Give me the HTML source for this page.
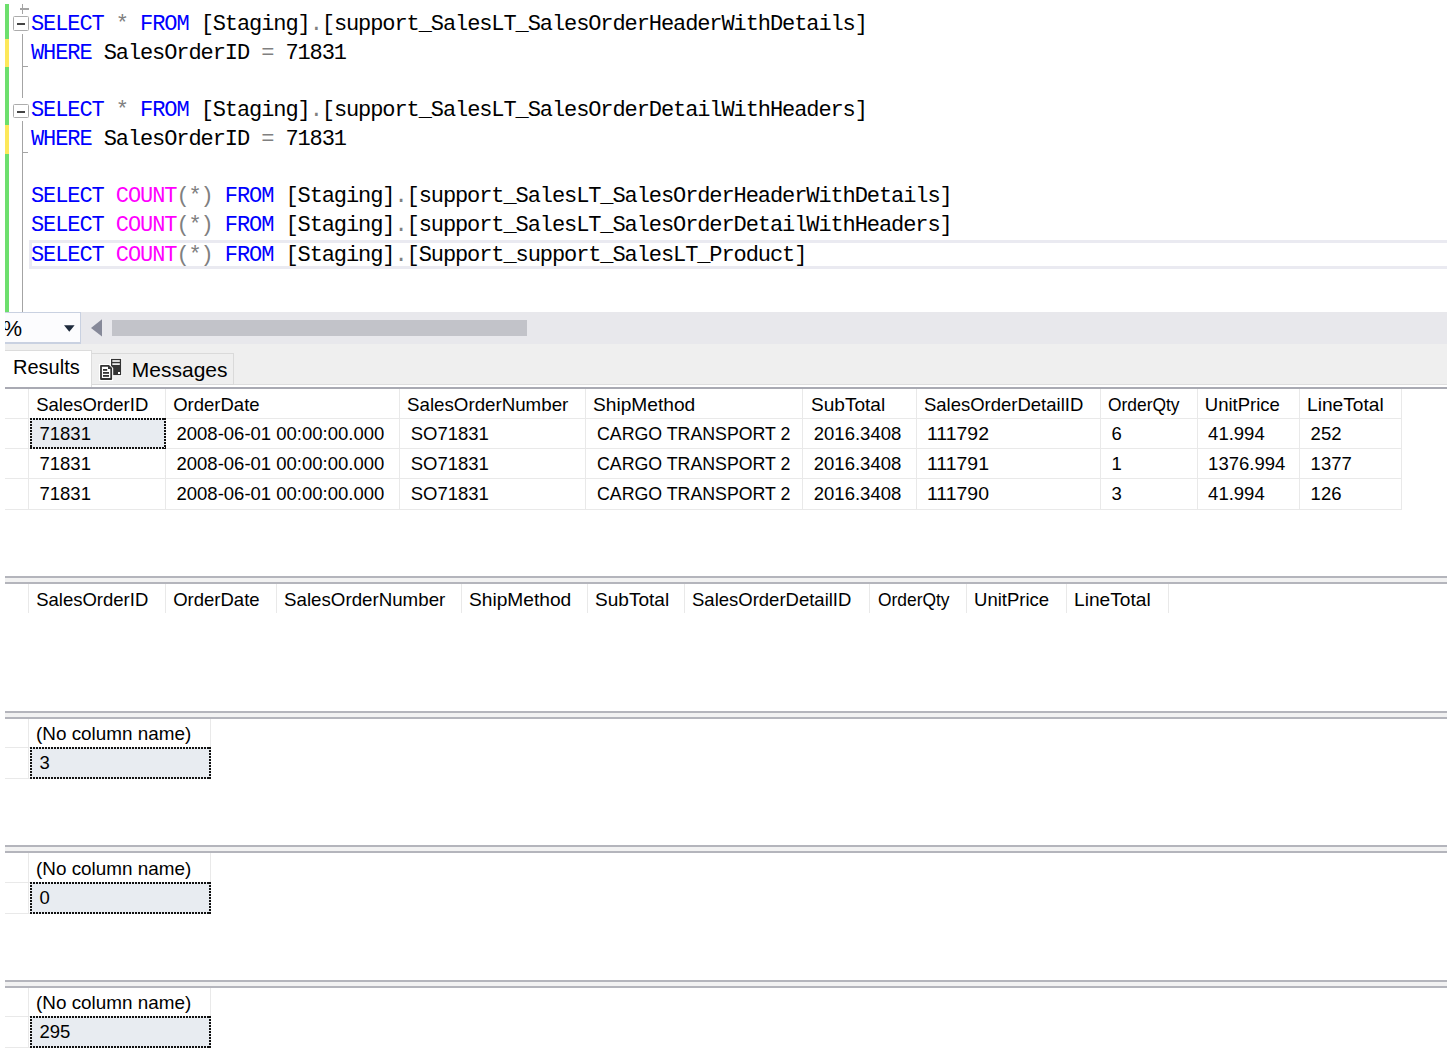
<!DOCTYPE html>
<html><head><meta charset="utf-8"><style>
html,body{margin:0;padding:0;background:#fff;}
body{width:1455px;height:1050px;position:relative;overflow:hidden;}
.m{position:absolute;white-space:pre;line-height:0;font-family:"Liberation Mono", monospace;font-size:22.0px;letter-spacing:-1.090px;}
.s{position:absolute;white-space:pre;line-height:0;font-family:"Liberation Sans", sans-serif;font-size:18.5px;color:#000;}
</style></head><body>
<div style="position:absolute;left:5px;top:4px;width:4px;height:34.6px;background:#6ddf6d;"></div>
<div style="position:absolute;left:5px;top:38.6px;width:4px;height:28.4px;background:#fde85a;"></div>
<div style="position:absolute;left:5px;top:67px;width:4px;height:57.7px;background:#6ddf6d;"></div>
<div style="position:absolute;left:5px;top:124.7px;width:4px;height:29.2px;background:#fde85a;"></div>
<div style="position:absolute;left:5px;top:153.9px;width:4px;height:158.1px;background:#6ddf6d;"></div>
<div style="position:absolute;left:21.6px;top:4.2px;width:1.5px;height:9.9px;background:#a4a4a4;"></div>
<div style="position:absolute;left:20.2px;top:8.4px;width:8.4px;height:1.4px;background:#a4a4a4;"></div>
<div style="position:absolute;left:21.6px;top:34.3px;width:1.5px;height:64.1px;background:#a4a4a4;"></div>
<div style="position:absolute;left:21.6px;top:66px;width:6.4px;height:1.4px;background:#a4a4a4;"></div>
<div style="position:absolute;left:21.6px;top:120.7px;width:1.5px;height:191.3px;background:#a4a4a4;"></div>
<div style="position:absolute;left:21.6px;top:152px;width:6.4px;height:1.4px;background:#a4a4a4;"></div>
<div style="position:absolute;left:13px;top:16px;width:15.8px;height:14.9px;box-sizing:border-box;border:1.4px solid #acacac;border-radius:1.5px;background:#fff"></div>
<div style="position:absolute;left:17px;top:22.9px;width:7.8px;height:2.1px;background:#454545;"></div>
<div style="position:absolute;left:13px;top:103.6px;width:15.8px;height:14.9px;box-sizing:border-box;border:1.4px solid #acacac;border-radius:1.5px;background:#fff"></div>
<div style="position:absolute;left:17px;top:110.5px;width:7.8px;height:2.1px;background:#454545;"></div>
<div style="position:absolute;left:29.3px;top:239.8px;width:1417.7px;height:29.2px;box-sizing:border-box;border:3px solid #eaeaf1;border-right:none"></div>
<div class="m" style="left:31.0px;top:24.54px"><span style="color:#0000ff">SELECT</span><span style="color:#000000"> </span><span style="color:#808080">*</span><span style="color:#000000"> </span><span style="color:#0000ff">FROM</span><span style="color:#000000"> </span><span style="color:#000000">[Staging]</span><span style="color:#808080">.</span><span style="color:#000000">[support_SalesLT_SalesOrderHeaderWithDetails]</span></div>
<div class="m" style="left:31.0px;top:53.54px"><span style="color:#0000ff">WHERE</span><span style="color:#000000"> SalesOrderID </span><span style="color:#808080">=</span><span style="color:#000000"> 71831</span></div>
<div class="m" style="left:31.0px;top:110.64px"><span style="color:#0000ff">SELECT</span><span style="color:#000000"> </span><span style="color:#808080">*</span><span style="color:#000000"> </span><span style="color:#0000ff">FROM</span><span style="color:#000000"> </span><span style="color:#000000">[Staging]</span><span style="color:#808080">.</span><span style="color:#000000">[support_SalesLT_SalesOrderDetailWithHeaders]</span></div>
<div class="m" style="left:31.0px;top:139.74px"><span style="color:#0000ff">WHERE</span><span style="color:#000000"> SalesOrderID </span><span style="color:#808080">=</span><span style="color:#000000"> 71831</span></div>
<div class="m" style="left:31.0px;top:196.84px"><span style="color:#0000ff">SELECT</span><span style="color:#000000"> </span><span style="color:#ff00ff">COUNT</span><span style="color:#808080">(*)</span><span style="color:#000000"> </span><span style="color:#0000ff">FROM</span><span style="color:#000000"> </span><span style="color:#000000">[Staging]</span><span style="color:#808080">.</span><span style="color:#000000">[support_SalesLT_SalesOrderHeaderWithDetails]</span></div>
<div class="m" style="left:31.0px;top:225.54px"><span style="color:#0000ff">SELECT</span><span style="color:#000000"> </span><span style="color:#ff00ff">COUNT</span><span style="color:#808080">(*)</span><span style="color:#000000"> </span><span style="color:#0000ff">FROM</span><span style="color:#000000"> </span><span style="color:#000000">[Staging]</span><span style="color:#808080">.</span><span style="color:#000000">[support_SalesLT_SalesOrderDetailWithHeaders]</span></div>
<div class="m" style="left:31.0px;top:255.94px"><span style="color:#0000ff">SELECT</span><span style="color:#000000"> </span><span style="color:#ff00ff">COUNT</span><span style="color:#808080">(*)</span><span style="color:#000000"> </span><span style="color:#0000ff">FROM</span><span style="color:#000000"> </span><span style="color:#000000">[Staging]</span><span style="color:#808080">.</span><span style="color:#000000">[Support_support_SalesLT_Product]</span></div>
<div style="position:absolute;left:80px;top:312px;width:1367px;height:31.5px;background:#e8e8ec;"></div>
<div style="position:absolute;left:5px;top:312px;width:75.5px;height:32px;box-sizing:border-box;border:1.5px solid #c9d1e1;border-bottom-width:2px;border-left:none;background:#fcfcfe;overflow:hidden"><div class="s" style="left:-2.5px;top:16.38px;font-size:22px">%</div></div>
<svg style="position:absolute;left:0;top:0" width="1455" height="400"><polygon points="64,325.2 74.6,325.2 69.3,331.8" fill="#1e2a3c"/><polygon points="102,319.2 102,336.6 91,327.9" fill="#868999"/></svg>
<div style="position:absolute;left:112px;top:319.6px;width:415.2px;height:16.4px;background:#c2c3c9;"></div>
<div style="position:absolute;left:5px;top:343.5px;width:1442px;height:41.5px;background:#efefef;"></div>
<div style="position:absolute;left:5px;top:384px;width:1442px;height:1px;background:#dedede;"></div>
<div style="position:absolute;left:5px;top:385px;width:1442px;height:2.3px;background:#ffffff;"></div>
<div style="position:absolute;left:5px;top:350.3px;width:87px;height:37px;box-sizing:border-box;background:#fff;border-top:1px solid #dcdcdc;border-right:1.5px solid #dcdcdc"></div>
<div style="position:absolute;left:92px;top:353px;width:142px;height:32px;box-sizing:border-box;background:#efefef;border:1px solid #dadada;border-left:none"></div>
<div class="s" style="left:13px;top:366.87px;font-size:20px;color:#000">Results</div>
<div class="s" style="left:131.8px;top:369.52px;font-size:21px;color:#000">Messages</div>
<svg style="position:absolute;left:96px;top:354px" width="30" height="30" viewBox="0 0 30 30"><rect x="14" y="3.9" width="12.1" height="18.2" fill="#fff" opacity="0.9"/><rect x="15" y="4.9" width="10.1" height="16.2" fill="#333"/><rect x="16.3" y="6.2" width="7.5" height="1.6" fill="#fff"/><rect x="16.3" y="9.3" width="7.5" height="1.6" fill="#fff"/><rect x="22" y="18" width="2" height="2" fill="#fff"/><path d="M3 10 H13.2 L17.2 14 V27 H3 Z" fill="#fff"/><path d="M5 11.8 H12.6 L15.2 14.4 V25 H5 Z" fill="#fff" stroke="#333" stroke-width="1.8" stroke-linejoin="round"/><path d="M12 11.5 V14.9 H15.4 Z" fill="#333"/><rect x="7" y="15" width="4.2" height="1.8" fill="#333"/><rect x="7" y="18" width="6" height="1.8" fill="#333"/><rect x="7" y="21" width="6" height="1.8" fill="#333"/></svg>
<div style="position:absolute;left:5px;top:387.3px;width:1442px;height:1.9px;background:#a9aab3;"></div>
<div style="position:absolute;left:28px;top:389.2px;width:1px;height:29.2px;background:#e9e9e9;"></div>
<div style="position:absolute;left:165px;top:389.2px;width:1px;height:29.2px;background:#e9e9e9;"></div>
<div style="position:absolute;left:399.2px;top:389.2px;width:1px;height:29.2px;background:#e9e9e9;"></div>
<div style="position:absolute;left:585.1px;top:389.2px;width:1px;height:29.2px;background:#e9e9e9;"></div>
<div style="position:absolute;left:802.3px;top:389.2px;width:1px;height:29.2px;background:#e9e9e9;"></div>
<div style="position:absolute;left:915.7px;top:389.2px;width:1px;height:29.2px;background:#e9e9e9;"></div>
<div style="position:absolute;left:1099.9px;top:389.2px;width:1px;height:29.2px;background:#e9e9e9;"></div>
<div style="position:absolute;left:1196.6px;top:389.2px;width:1px;height:29.2px;background:#e9e9e9;"></div>
<div style="position:absolute;left:1299.1px;top:389.2px;width:1px;height:29.2px;background:#e9e9e9;"></div>
<div style="position:absolute;left:1401px;top:389.2px;width:1px;height:29.2px;background:#e9e9e9;"></div>
<div class="s" style="left:36.2px;top:404.79px;font-size:18.5px;color:#000">SalesOrderID</div>
<div class="s" style="left:173.2px;top:404.79px;font-size:18.5px;color:#000">OrderDate</div>
<div class="s" style="left:407.4px;top:404.79px;font-size:18.5px;color:#000;transform:scaleX(1.012);transform-origin:0 0">SalesOrderNumber</div>
<div class="s" style="left:593.3000000000001px;top:404.79px;font-size:18.5px;color:#000;transform:scaleX(1.035);transform-origin:0 0">ShipMethod</div>
<div class="s" style="left:810.5px;top:404.79px;font-size:18.5px;color:#000;transform:scaleX(1.03);transform-origin:0 0">SubTotal</div>
<div class="s" style="left:923.9000000000001px;top:404.79px;font-size:18.5px;color:#000">SalesOrderDetailID</div>
<div class="s" style="left:1108.1000000000001px;top:404.79px;font-size:18.5px;color:#000;transform:scaleX(0.94);transform-origin:0 0">OrderQty</div>
<div class="s" style="left:1204.8px;top:404.79px;font-size:18.5px;color:#000">UnitPrice</div>
<div class="s" style="left:1307.3px;top:404.79px;font-size:18.5px;color:#000;transform:scaleX(1.035);transform-origin:0 0">LineTotal</div>
<div style="position:absolute;left:5px;top:417.9px;width:1397px;height:1px;background:#e9e9e9;"></div>
<div style="position:absolute;left:5px;top:448.15px;width:1397px;height:1px;background:#e9e9e9;"></div>
<div style="position:absolute;left:28px;top:418.4px;width:1px;height:30.25px;background:#e9e9e9;"></div>
<div style="position:absolute;left:165px;top:418.4px;width:1px;height:30.25px;background:#e9e9e9;"></div>
<div style="position:absolute;left:399.2px;top:418.4px;width:1px;height:30.25px;background:#e9e9e9;"></div>
<div style="position:absolute;left:585.1px;top:418.4px;width:1px;height:30.25px;background:#e9e9e9;"></div>
<div style="position:absolute;left:802.3px;top:418.4px;width:1px;height:30.25px;background:#e9e9e9;"></div>
<div style="position:absolute;left:915.7px;top:418.4px;width:1px;height:30.25px;background:#e9e9e9;"></div>
<div style="position:absolute;left:1099.9px;top:418.4px;width:1px;height:30.25px;background:#e9e9e9;"></div>
<div style="position:absolute;left:1196.6px;top:418.4px;width:1px;height:30.25px;background:#e9e9e9;"></div>
<div style="position:absolute;left:1299.1px;top:418.4px;width:1px;height:30.25px;background:#e9e9e9;"></div>
<div style="position:absolute;left:1401px;top:418.4px;width:1px;height:30.25px;background:#e9e9e9;"></div>
<div class="s" style="left:39.5px;top:433.99px;font-size:18.5px;color:#000">71831</div>
<div class="s" style="left:176.5px;top:433.99px;font-size:18.5px;color:#000">2008-06-01 00:00:00.000</div>
<div class="s" style="left:410.7px;top:433.99px;font-size:18.5px;color:#000">SO71831</div>
<div class="s" style="left:596.6px;top:433.99px;font-size:18.5px;color:#000;transform:scaleX(0.96);transform-origin:0 0">CARGO TRANSPORT 2</div>
<div class="s" style="left:813.8px;top:433.99px;font-size:18.5px;color:#000">2016.3408</div>
<div class="s" style="left:927.2px;top:433.99px;font-size:18.5px;color:#000;transform:scaleX(1.05);transform-origin:0 0">111792</div>
<div class="s" style="left:1111.4px;top:433.99px;font-size:18.5px;color:#000">6</div>
<div class="s" style="left:1208.1px;top:433.99px;font-size:18.5px;color:#000">41.994</div>
<div class="s" style="left:1310.6px;top:433.99px;font-size:18.5px;color:#000">252</div>
<div style="position:absolute;left:5px;top:478.4px;width:1397px;height:1px;background:#e9e9e9;"></div>
<div style="position:absolute;left:28px;top:448.65px;width:1px;height:30.25px;background:#e9e9e9;"></div>
<div style="position:absolute;left:165px;top:448.65px;width:1px;height:30.25px;background:#e9e9e9;"></div>
<div style="position:absolute;left:399.2px;top:448.65px;width:1px;height:30.25px;background:#e9e9e9;"></div>
<div style="position:absolute;left:585.1px;top:448.65px;width:1px;height:30.25px;background:#e9e9e9;"></div>
<div style="position:absolute;left:802.3px;top:448.65px;width:1px;height:30.25px;background:#e9e9e9;"></div>
<div style="position:absolute;left:915.7px;top:448.65px;width:1px;height:30.25px;background:#e9e9e9;"></div>
<div style="position:absolute;left:1099.9px;top:448.65px;width:1px;height:30.25px;background:#e9e9e9;"></div>
<div style="position:absolute;left:1196.6px;top:448.65px;width:1px;height:30.25px;background:#e9e9e9;"></div>
<div style="position:absolute;left:1299.1px;top:448.65px;width:1px;height:30.25px;background:#e9e9e9;"></div>
<div style="position:absolute;left:1401px;top:448.65px;width:1px;height:30.25px;background:#e9e9e9;"></div>
<div class="s" style="left:39.5px;top:464.24px;font-size:18.5px;color:#000">71831</div>
<div class="s" style="left:176.5px;top:464.24px;font-size:18.5px;color:#000">2008-06-01 00:00:00.000</div>
<div class="s" style="left:410.7px;top:464.24px;font-size:18.5px;color:#000">SO71831</div>
<div class="s" style="left:596.6px;top:464.24px;font-size:18.5px;color:#000;transform:scaleX(0.96);transform-origin:0 0">CARGO TRANSPORT 2</div>
<div class="s" style="left:813.8px;top:464.24px;font-size:18.5px;color:#000">2016.3408</div>
<div class="s" style="left:927.2px;top:464.24px;font-size:18.5px;color:#000;transform:scaleX(1.05);transform-origin:0 0">111791</div>
<div class="s" style="left:1111.4px;top:464.24px;font-size:18.5px;color:#000">1</div>
<div class="s" style="left:1208.1px;top:464.24px;font-size:18.5px;color:#000">1376.994</div>
<div class="s" style="left:1310.6px;top:464.24px;font-size:18.5px;color:#000">1377</div>
<div style="position:absolute;left:5px;top:508.65px;width:1397px;height:1px;background:#e9e9e9;"></div>
<div style="position:absolute;left:28px;top:478.9px;width:1px;height:30.25px;background:#e9e9e9;"></div>
<div style="position:absolute;left:165px;top:478.9px;width:1px;height:30.25px;background:#e9e9e9;"></div>
<div style="position:absolute;left:399.2px;top:478.9px;width:1px;height:30.25px;background:#e9e9e9;"></div>
<div style="position:absolute;left:585.1px;top:478.9px;width:1px;height:30.25px;background:#e9e9e9;"></div>
<div style="position:absolute;left:802.3px;top:478.9px;width:1px;height:30.25px;background:#e9e9e9;"></div>
<div style="position:absolute;left:915.7px;top:478.9px;width:1px;height:30.25px;background:#e9e9e9;"></div>
<div style="position:absolute;left:1099.9px;top:478.9px;width:1px;height:30.25px;background:#e9e9e9;"></div>
<div style="position:absolute;left:1196.6px;top:478.9px;width:1px;height:30.25px;background:#e9e9e9;"></div>
<div style="position:absolute;left:1299.1px;top:478.9px;width:1px;height:30.25px;background:#e9e9e9;"></div>
<div style="position:absolute;left:1401px;top:478.9px;width:1px;height:30.25px;background:#e9e9e9;"></div>
<div class="s" style="left:39.5px;top:494.49px;font-size:18.5px;color:#000">71831</div>
<div class="s" style="left:176.5px;top:494.49px;font-size:18.5px;color:#000">2008-06-01 00:00:00.000</div>
<div class="s" style="left:410.7px;top:494.49px;font-size:18.5px;color:#000">SO71831</div>
<div class="s" style="left:596.6px;top:494.49px;font-size:18.5px;color:#000;transform:scaleX(0.96);transform-origin:0 0">CARGO TRANSPORT 2</div>
<div class="s" style="left:813.8px;top:494.49px;font-size:18.5px;color:#000">2016.3408</div>
<div class="s" style="left:927.2px;top:494.49px;font-size:18.5px;color:#000;transform:scaleX(1.05);transform-origin:0 0">111790</div>
<div class="s" style="left:1111.4px;top:494.49px;font-size:18.5px;color:#000">3</div>
<div class="s" style="left:1208.1px;top:494.49px;font-size:18.5px;color:#000">41.994</div>
<div class="s" style="left:1310.6px;top:494.49px;font-size:18.5px;color:#000">126</div>
<div style="position:absolute;left:29.5px;top:417.9px;width:136.8px;height:31.55000000000001px;background:#e8ecf1"></div>
<div style="position:absolute;left:29.5px;top:417.9px;width:136.8px;height:2px;background:repeating-linear-gradient(90deg,#111 0 2px,transparent 2px 3px)"></div>
<div style="position:absolute;left:29.5px;top:447.45px;width:136.8px;height:2px;background:repeating-linear-gradient(90deg,#111 0 2px,transparent 2px 3px)"></div>
<div style="position:absolute;left:29.5px;top:417.9px;width:2px;height:31.55000000000001px;background:repeating-linear-gradient(180deg,#111 0 2px,transparent 2px 3px)"></div>
<div style="position:absolute;left:164.3px;top:417.9px;width:2px;height:31.55000000000001px;background:repeating-linear-gradient(180deg,#111 0 2px,transparent 2px 3px)"></div>
<div class="s" style="left:39.5px;top:433.99px;font-size:18.5px;color:#000">71831</div>
<div style="position:absolute;left:5px;top:576.2px;width:1442px;height:2px;background:#b4b5bc;"></div>
<div style="position:absolute;left:5px;top:578.2px;width:1442px;height:4px;background:#f2f2f2;"></div>
<div style="position:absolute;left:5px;top:582.2px;width:1442px;height:2px;background:#b4b5bc;"></div>
<div style="position:absolute;left:28px;top:584.2px;width:1px;height:28.5px;background:#e9e9e9;"></div>
<div style="position:absolute;left:165px;top:584.2px;width:1px;height:28.5px;background:#e9e9e9;"></div>
<div style="position:absolute;left:275.6px;top:584.2px;width:1px;height:28.5px;background:#e9e9e9;"></div>
<div style="position:absolute;left:461.2px;top:584.2px;width:1px;height:28.5px;background:#e9e9e9;"></div>
<div style="position:absolute;left:586.6px;top:584.2px;width:1px;height:28.5px;background:#e9e9e9;"></div>
<div style="position:absolute;left:683.8px;top:584.2px;width:1px;height:28.5px;background:#e9e9e9;"></div>
<div style="position:absolute;left:869.3px;top:584.2px;width:1px;height:28.5px;background:#e9e9e9;"></div>
<div style="position:absolute;left:965.9px;top:584.2px;width:1px;height:28.5px;background:#e9e9e9;"></div>
<div style="position:absolute;left:1065.6px;top:584.2px;width:1px;height:28.5px;background:#e9e9e9;"></div>
<div style="position:absolute;left:1167.6px;top:584.2px;width:1px;height:28.5px;background:#e9e9e9;"></div>
<div class="s" style="left:36.2px;top:599.79px;font-size:18.5px;color:#000">SalesOrderID</div>
<div class="s" style="left:173.2px;top:599.79px;font-size:18.5px;color:#000">OrderDate</div>
<div class="s" style="left:283.8px;top:599.79px;font-size:18.5px;color:#000;transform:scaleX(1.012);transform-origin:0 0">SalesOrderNumber</div>
<div class="s" style="left:469.4px;top:599.79px;font-size:18.5px;color:#000;transform:scaleX(1.035);transform-origin:0 0">ShipMethod</div>
<div class="s" style="left:594.8000000000001px;top:599.79px;font-size:18.5px;color:#000;transform:scaleX(1.03);transform-origin:0 0">SubTotal</div>
<div class="s" style="left:692.0px;top:599.79px;font-size:18.5px;color:#000">SalesOrderDetailID</div>
<div class="s" style="left:877.5px;top:599.79px;font-size:18.5px;color:#000;transform:scaleX(0.94);transform-origin:0 0">OrderQty</div>
<div class="s" style="left:974.1px;top:599.79px;font-size:18.5px;color:#000">UnitPrice</div>
<div class="s" style="left:1073.8px;top:599.79px;font-size:18.5px;color:#000;transform:scaleX(1.035);transform-origin:0 0">LineTotal</div>
<div style="position:absolute;left:5px;top:710.6px;width:1442px;height:2px;background:#b4b5bc;"></div>
<div style="position:absolute;left:5px;top:712.6px;width:1442px;height:4px;background:#f2f2f2;"></div>
<div style="position:absolute;left:5px;top:716.6px;width:1442px;height:2px;background:#b4b5bc;"></div>
<div style="position:absolute;left:28px;top:718.6px;width:1px;height:29px;background:#e9e9e9;"></div>
<div style="position:absolute;left:209.8px;top:718.6px;width:1px;height:29px;background:#e9e9e9;"></div>
<div class="s" style="left:36.2px;top:734.19px;font-size:18.5px;color:#000;transform:scaleX(1.02);transform-origin:0 0">(No column name)</div>
<div style="position:absolute;left:5px;top:747.1px;width:205.8px;height:1px;background:#e9e9e9;"></div>
<div style="position:absolute;left:5px;top:777.9px;width:205.8px;height:1px;background:#e9e9e9;"></div>
<div style="position:absolute;left:28px;top:747.6px;width:1px;height:30.8px;background:#e9e9e9;"></div>
<div style="position:absolute;left:209.8px;top:747.6px;width:1px;height:30.8px;background:#e9e9e9;"></div>
<div class="s" style="left:39.5px;top:763.39px;font-size:18.5px;color:#000">3</div>
<div style="position:absolute;left:29.5px;top:747.1px;width:181.60000000000002px;height:32.09999999999991px;background:#e8ecf1"></div>
<div style="position:absolute;left:29.5px;top:747.1px;width:181.60000000000002px;height:2px;background:repeating-linear-gradient(90deg,#111 0 2px,transparent 2px 3px)"></div>
<div style="position:absolute;left:29.5px;top:777.1999999999999px;width:181.60000000000002px;height:2px;background:repeating-linear-gradient(90deg,#111 0 2px,transparent 2px 3px)"></div>
<div style="position:absolute;left:29.5px;top:747.1px;width:2px;height:32.09999999999991px;background:repeating-linear-gradient(180deg,#111 0 2px,transparent 2px 3px)"></div>
<div style="position:absolute;left:209.10000000000002px;top:747.1px;width:2px;height:32.09999999999991px;background:repeating-linear-gradient(180deg,#111 0 2px,transparent 2px 3px)"></div>
<div class="s" style="left:39.5px;top:763.39px;font-size:18.5px;color:#000">3</div>
<div style="position:absolute;left:5px;top:845.2px;width:1442px;height:2px;background:#b4b5bc;"></div>
<div style="position:absolute;left:5px;top:847.2px;width:1442px;height:4px;background:#f2f2f2;"></div>
<div style="position:absolute;left:5px;top:851.2px;width:1442px;height:2px;background:#b4b5bc;"></div>
<div style="position:absolute;left:28px;top:853.2px;width:1px;height:29px;background:#e9e9e9;"></div>
<div style="position:absolute;left:209.8px;top:853.2px;width:1px;height:29px;background:#e9e9e9;"></div>
<div class="s" style="left:36.2px;top:868.79px;font-size:18.5px;color:#000;transform:scaleX(1.02);transform-origin:0 0">(No column name)</div>
<div style="position:absolute;left:5px;top:881.7px;width:205.8px;height:1px;background:#e9e9e9;"></div>
<div style="position:absolute;left:5px;top:912.5px;width:205.8px;height:1px;background:#e9e9e9;"></div>
<div style="position:absolute;left:28px;top:882.2px;width:1px;height:30.8px;background:#e9e9e9;"></div>
<div style="position:absolute;left:209.8px;top:882.2px;width:1px;height:30.8px;background:#e9e9e9;"></div>
<div class="s" style="left:39.5px;top:897.99px;font-size:18.5px;color:#000">0</div>
<div style="position:absolute;left:29.5px;top:881.7px;width:181.60000000000002px;height:32.09999999999991px;background:#e8ecf1"></div>
<div style="position:absolute;left:29.5px;top:881.7px;width:181.60000000000002px;height:2px;background:repeating-linear-gradient(90deg,#111 0 2px,transparent 2px 3px)"></div>
<div style="position:absolute;left:29.5px;top:911.8px;width:181.60000000000002px;height:2px;background:repeating-linear-gradient(90deg,#111 0 2px,transparent 2px 3px)"></div>
<div style="position:absolute;left:29.5px;top:881.7px;width:2px;height:32.09999999999991px;background:repeating-linear-gradient(180deg,#111 0 2px,transparent 2px 3px)"></div>
<div style="position:absolute;left:209.10000000000002px;top:881.7px;width:2px;height:32.09999999999991px;background:repeating-linear-gradient(180deg,#111 0 2px,transparent 2px 3px)"></div>
<div class="s" style="left:39.5px;top:897.99px;font-size:18.5px;color:#000">0</div>
<div style="position:absolute;left:5px;top:979.6px;width:1442px;height:2px;background:#b4b5bc;"></div>
<div style="position:absolute;left:5px;top:981.6px;width:1442px;height:4px;background:#f2f2f2;"></div>
<div style="position:absolute;left:5px;top:985.6px;width:1442px;height:2px;background:#b4b5bc;"></div>
<div style="position:absolute;left:28px;top:987.6px;width:1px;height:29px;background:#e9e9e9;"></div>
<div style="position:absolute;left:209.8px;top:987.6px;width:1px;height:29px;background:#e9e9e9;"></div>
<div class="s" style="left:36.2px;top:1003.19px;font-size:18.5px;color:#000;transform:scaleX(1.02);transform-origin:0 0">(No column name)</div>
<div style="position:absolute;left:5px;top:1016.1px;width:205.8px;height:1px;background:#e9e9e9;"></div>
<div style="position:absolute;left:5px;top:1046.9px;width:205.8px;height:1px;background:#e9e9e9;"></div>
<div style="position:absolute;left:28px;top:1016.6px;width:1px;height:30.8px;background:#e9e9e9;"></div>
<div style="position:absolute;left:209.8px;top:1016.6px;width:1px;height:30.8px;background:#e9e9e9;"></div>
<div class="s" style="left:39.5px;top:1032.39px;font-size:18.5px;color:#000">295</div>
<div style="position:absolute;left:29.5px;top:1016.1px;width:181.60000000000002px;height:32.10000000000002px;background:#e8ecf1"></div>
<div style="position:absolute;left:29.5px;top:1016.1px;width:181.60000000000002px;height:2px;background:repeating-linear-gradient(90deg,#111 0 2px,transparent 2px 3px)"></div>
<div style="position:absolute;left:29.5px;top:1046.2px;width:181.60000000000002px;height:2px;background:repeating-linear-gradient(90deg,#111 0 2px,transparent 2px 3px)"></div>
<div style="position:absolute;left:29.5px;top:1016.1px;width:2px;height:32.10000000000002px;background:repeating-linear-gradient(180deg,#111 0 2px,transparent 2px 3px)"></div>
<div style="position:absolute;left:209.10000000000002px;top:1016.1px;width:2px;height:32.10000000000002px;background:repeating-linear-gradient(180deg,#111 0 2px,transparent 2px 3px)"></div>
<div class="s" style="left:39.5px;top:1032.39px;font-size:18.5px;color:#000">295</div>
</body></html>
